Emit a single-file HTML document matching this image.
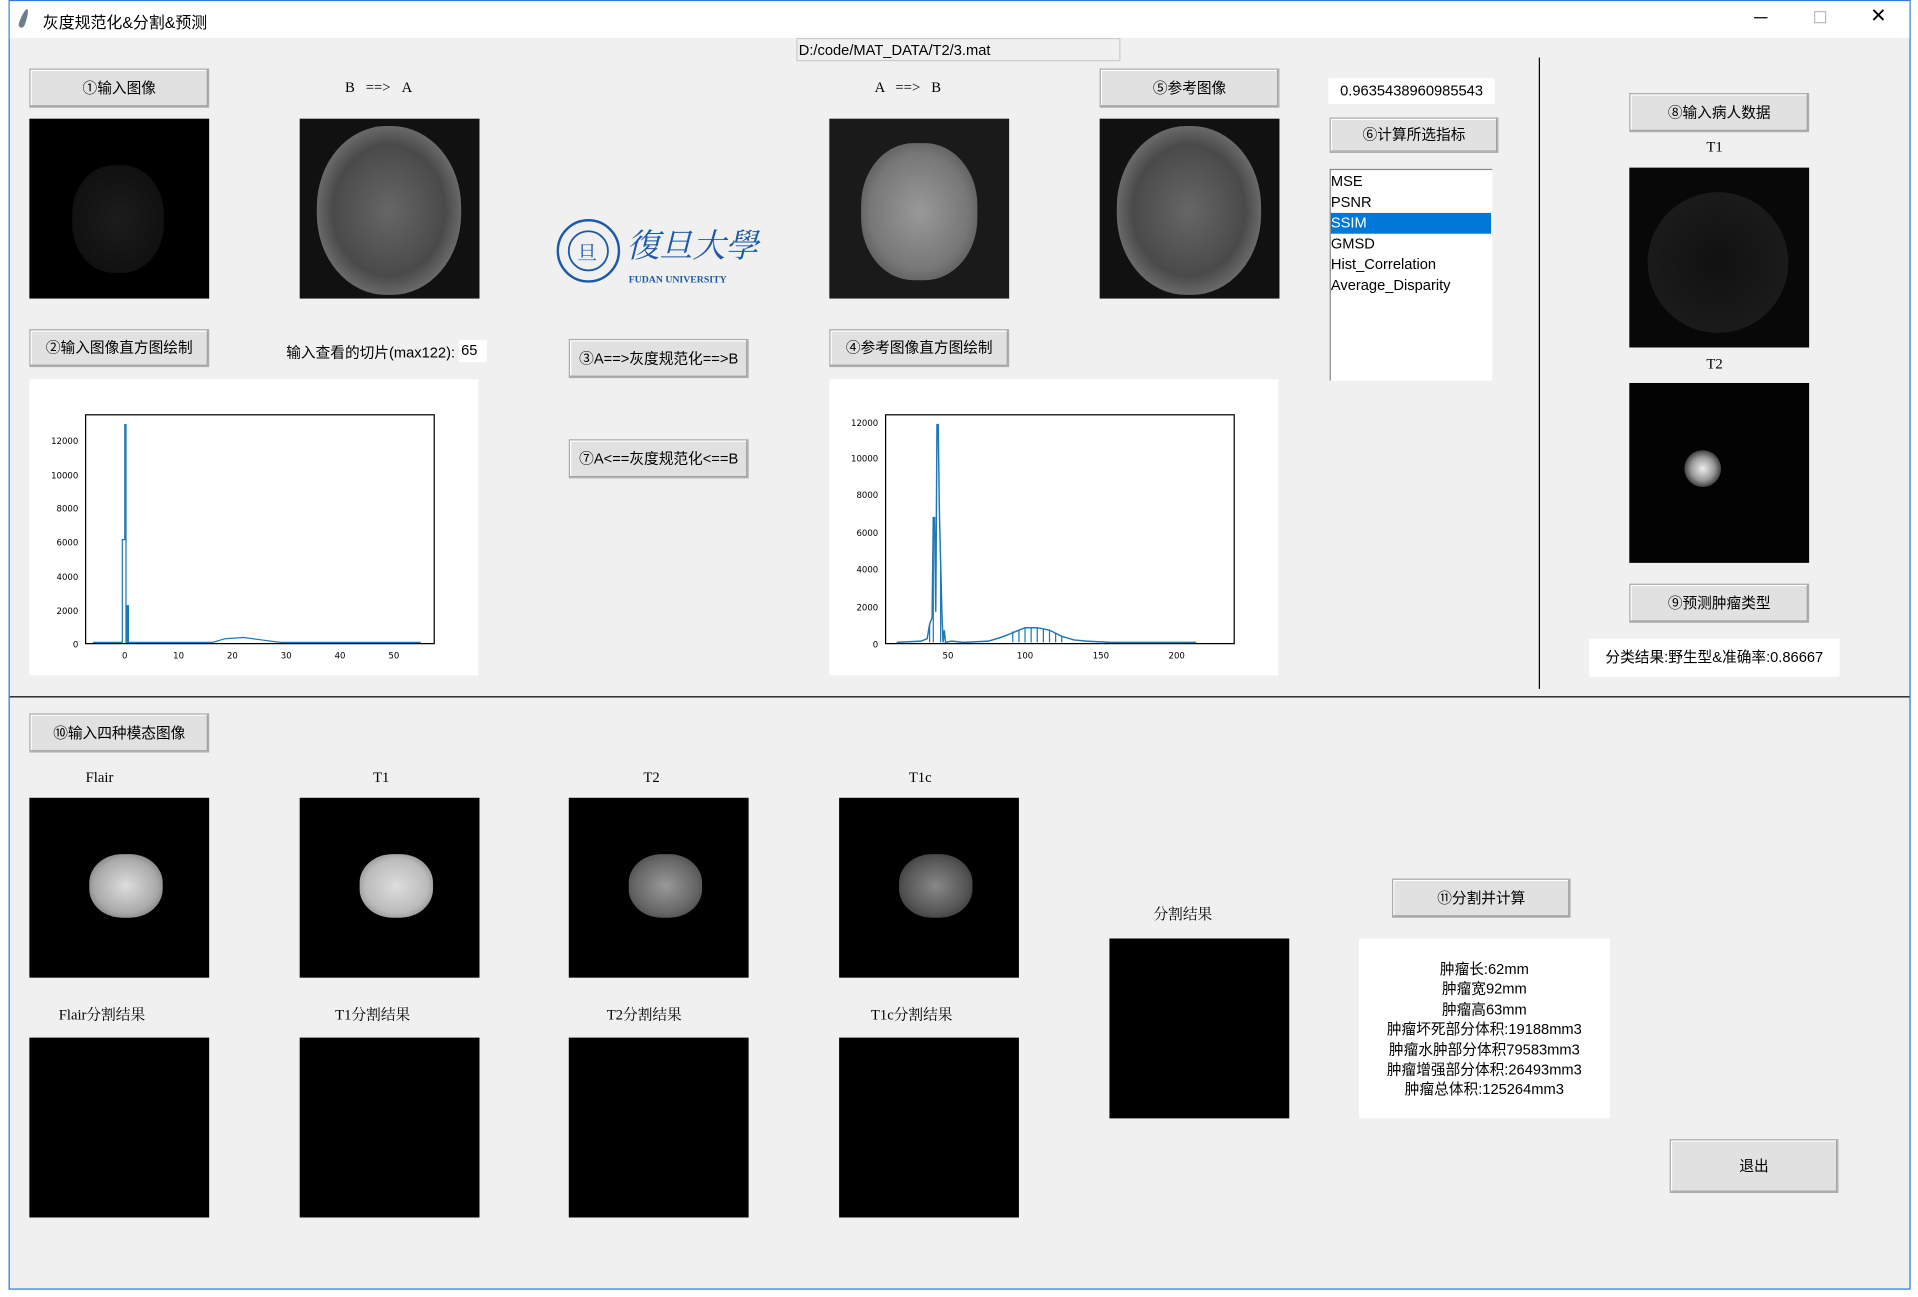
<!DOCTYPE html>
<html><head><meta charset="utf-8"><style>
*{margin:0;padding:0;box-sizing:border-box}
html,body{width:1918px;height:1297px;overflow:hidden;background:#fff}
#w{position:absolute;left:0;top:0;width:1568px;height:1060px;transform:scale(1.2232,1.2236);transform-origin:0 0;font-family:"Liberation Sans","Noto Sans CJK SC",sans-serif;font-size:12px;color:#000}
.a{position:absolute}
.btn{position:absolute;background:#e1e1e1;border:1px solid #adadad;box-shadow:inset -1px -1px 0 #a0a0a0,inset 1px 1px 0 #fff;text-align:center;font-size:12px}
.img{position:absolute;background:#000;overflow:hidden}
.lbl{position:absolute;font-family:"Liberation Serif","Noto Serif CJK SC",serif;font-size:12px;white-space:nowrap}
.wh{position:absolute;background:#fff}
</style></head><body>
<div id="w">
<div class="a" style="left:7px;top:0;width:1555px;height:1054px;border:1px solid #2b7ad6;background:#f0f0f0"></div>
<div class="a" style="left:8px;top:1px;width:1553px;height:30px;background:#fff"></div>
<div class="a" style="left:17px;top:7px;width:5px;height:16px;background:#6a7c90;border-radius:50% 50% 50% 50%/80% 80% 20% 20%;transform:rotate(20deg)"></div>
<div class="a" style="left:35px;top:8px;font-size:13px">灰度规范化&amp;分割&amp;预测</div>
<div class="a" style="left:1434px;top:14px;width:11px;height:1px;background:#000"></div>
<div class="a" style="left:1483px;top:9px;width:10px;height:10px;border:1px solid #bbb"></div>
<div class="a" style="left:1529px;top:3px;font-size:16px;font-weight:300">✕</div>

<div class="a" style="left:651px;top:31px;width:265px;height:19px;background:#f0f0f0;border:1px solid #ccc;padding:2px 1px;font-size:12px">D:/code/MAT_DATA/T2/3.mat</div>

<div class="btn" style="left:24px;top:56px;width:147px;height:32px;line-height:30px">①输入图像</div>
<div class="lbl" style="left:282px;top:64px">B &nbsp;&nbsp;==&gt; &nbsp;&nbsp;A</div>
<div class="lbl" style="left:715px;top:64px">A &nbsp;&nbsp;==&gt; &nbsp;&nbsp;B</div>
<div class="btn" style="left:899px;top:56px;width:147px;height:32px;line-height:30px">⑤参考图像</div>

<div class="img" style="left:24px;top:97px;width:147px;height:147px"><div class="a" style="left:35px;top:38px;width:75px;height:88px;border-radius:45%;background:radial-gradient(#1c1c1c,#111 70%,#000)"></div></div>
<div class="img" style="left:245px;top:97px;width:147px;height:147px;background:#111"><div class="a" style="left:14px;top:6px;width:118px;height:138px;border-radius:48%;background:radial-gradient(#666,#4a4a4a 55%,#7a7a7a 80%,#222 95%)"></div></div>
<div class="img" style="left:678px;top:97px;width:147px;height:147px;background:#1a1a1a"><div class="a" style="left:26px;top:20px;width:95px;height:112px;border-radius:45%;background:radial-gradient(#999,#777 60%,#444 95%)"></div></div>
<div class="img" style="left:899px;top:97px;width:147px;height:147px;background:#111"><div class="a" style="left:14px;top:6px;width:118px;height:138px;border-radius:48%;background:radial-gradient(#666,#4a4a4a 55%,#7a7a7a 80%,#222 95%)"></div></div>

<svg class="a" style="left:455px;top:172px" width="170" height="62">
<circle cx="26" cy="33" r="25" fill="none" stroke="#1c5aa8" stroke-width="2"/>
<circle cx="26" cy="33" r="16" fill="none" stroke="#1c5aa8" stroke-width="1.5"/>
<text x="17" y="40" font-size="16" fill="#1c5aa8" font-family="Noto Serif CJK SC,serif">旦</text>
<text x="57" y="38" font-size="27" fill="#1c5aa8" font-family="Noto Serif CJK SC,serif" font-style="italic">復旦大學</text>
<text x="59" y="59" font-size="8" fill="#1c5aa8" font-family="Liberation Serif,serif" font-weight="bold">FUDAN UNIVERSITY</text>
</svg>

<div class="wh" style="left:1086px;top:64px;width:136px;height:21px;text-align:center;line-height:21px">0.9635438960985543</div>
<div class="btn" style="left:1087px;top:96px;width:138px;height:29px;line-height:27px">⑥计算所选指标</div>
<div class="wh" style="left:1087px;top:138px;width:133px;height:173px;border-left:1px solid #888;border-top:1px solid #888;line-height:17px;padding-top:1px">
<div>MSE</div><div>PSNR</div><div style="background:#0078d7;color:#fff;width:131px">SSIM</div><div>GMSD</div><div>Hist_Correlation</div><div>Average_Disparity</div></div>

<div class="a" style="left:1258px;top:47px;width:1px;height:516px;background:#000"></div>
<div class="btn" style="left:1332px;top:76px;width:147px;height:32px;line-height:30px">⑧输入病人数据</div>
<div class="lbl" style="left:1395px;top:113px">T1</div>
<div class="img" style="left:1332px;top:137px;width:147px;height:147px;background:#080808"><div class="a" style="left:15px;top:20px;width:115px;height:115px;border-radius:50%;background:radial-gradient(#111,#1c1c1c 80%,#080808)"></div></div>
<div class="lbl" style="left:1395px;top:290px">T2</div>
<div class="img" style="left:1332px;top:313px;width:147px;height:147px;background:#030303"><div class="a" style="left:45px;top:55px;width:30px;height:30px;border-radius:50%;background:radial-gradient(#eee,#999 45%,#222 80%,transparent)"></div></div>
<div class="btn" style="left:1332px;top:477px;width:147px;height:32px;line-height:30px">⑨预测肿瘤类型</div>
<div class="wh" style="left:1299px;top:522px;width:205px;height:31px;line-height:31px;text-align:center">分类结果:野生型&amp;准确率:0.86667</div>

<div class="btn" style="left:24px;top:269px;width:147px;height:31px;line-height:29px">②输入图像直方图绘制</div>
<div class="a" style="left:234px;top:279px">输入查看的切片(max122):</div>
<div class="wh" style="left:375px;top:278px;width:23px;height:18px;padding-left:2px;line-height:17px">65</div>
<div class="btn" style="left:465px;top:277px;width:147px;height:32px;line-height:30px">③A==&gt;灰度规范化==&gt;B</div>
<div class="btn" style="left:465px;top:359px;width:147px;height:32px;line-height:30px">⑦A&lt;==灰度规范化&lt;==B</div>
<div class="btn" style="left:678px;top:269px;width:147px;height:31px;line-height:29px">④参考图像直方图绘制</div>

<svg class="a" style="left:24px;top:310px;background:#fff" width="367" height="242" font-family="DejaVu Sans,sans-serif" font-size="7">
<rect x="46" y="29" width="285" height="187" fill="none" stroke="#000"/>
<g text-anchor="end"><text x="40" y="219">0</text><text x="40" y="192">2000</text><text x="40" y="164">4000</text><text x="40" y="136">6000</text><text x="40" y="108">8000</text><text x="40" y="81">10000</text><text x="40" y="53">12000</text></g>
<g text-anchor="middle"><text x="78" y="228">0</text><text x="122" y="228">10</text><text x="166" y="228">20</text><text x="210" y="228">30</text><text x="254" y="228">40</text><text x="298" y="228">50</text></g>
<polyline fill="none" stroke="#1f77b4" stroke-width="1" points="52,215 76,215 76,131 78,131 78,37 79,37 79,215 80,215 80,185 81,185 81,215 150,215 160,212 175,211 190,213 205,215 320,215"/>
</svg>
<svg class="a" style="left:678px;top:310px;background:#fff" width="367" height="242" font-family="DejaVu Sans,sans-serif" font-size="7">
<rect x="46" y="29" width="285" height="187" fill="none" stroke="#000"/>
<g text-anchor="end"><text x="40" y="219">0</text><text x="40" y="189">2000</text><text x="40" y="158">4000</text><text x="40" y="128">6000</text><text x="40" y="97">8000</text><text x="40" y="67">10000</text><text x="40" y="38">12000</text></g>
<g text-anchor="middle"><text x="97" y="228">50</text><text x="160" y="228">100</text><text x="222" y="228">150</text><text x="284" y="228">200</text></g>
<polyline fill="none" stroke="#1f77b4" stroke-width="1.2" points="55,215 75,214 80,212 82,200 84,195 85,113 86,113 87,190 88,37 89,37 90,110 91,150 92,190 93,215 94,205 95,215 100,214 110,215 130,214 140,211 148,208 155,205 160,203 170,203 180,205 190,210 200,213 210,214 230,215 300,215"/>
<g stroke="#1f77b4" stroke-width="1"><line x1="85" y1="113" x2="85" y2="215"/><line x1="82" y1="200" x2="82" y2="215"/><line x1="91" y1="150" x2="91" y2="215"/><line x1="150" y1="206" x2="150" y2="215"/><line x1="155" y1="205" x2="155" y2="215"/><line x1="160" y1="203" x2="160" y2="215"/><line x1="165" y1="203" x2="165" y2="215"/><line x1="170" y1="203" x2="170" y2="215"/><line x1="175" y1="204" x2="175" y2="215"/><line x1="180" y1="205" x2="180" y2="215"/><line x1="185" y1="207" x2="185" y2="215"/><line x1="190" y1="210" x2="190" y2="215"/></g>
</svg>

<div class="a" style="left:8px;top:569px;width:1553px;height:1px;background:#000"></div>
<div class="btn" style="left:24px;top:583px;width:147px;height:32px;line-height:30px">⑩输入四种模态图像</div>
<div class="lbl" style="left:70px;top:628px">Flair</div>
<div class="lbl" style="left:305px;top:628px">T1</div>
<div class="lbl" style="left:526px;top:628px">T2</div>
<div class="lbl" style="left:743px;top:628px">T1c</div>
<div class="img" style="left:24px;top:652px;width:147px;height:147px"><div class="a" style="left:49px;top:46px;width:60px;height:52px;border-radius:45%;background:radial-gradient(#ddd,#aaa 60%,#555)"></div></div>
<div class="img" style="left:245px;top:652px;width:147px;height:147px"><div class="a" style="left:49px;top:46px;width:60px;height:52px;border-radius:45%;background:radial-gradient(#ddd,#bbb 60%,#666)"></div></div>
<div class="img" style="left:465px;top:652px;width:147px;height:147px"><div class="a" style="left:49px;top:46px;width:60px;height:52px;border-radius:45%;background:radial-gradient(#999,#666 60%,#333)"></div></div>
<div class="img" style="left:686px;top:652px;width:147px;height:147px"><div class="a" style="left:49px;top:46px;width:60px;height:52px;border-radius:45%;background:radial-gradient(#888,#555 60%,#222)"></div></div>
<div class="lbl" style="left:48px;top:820px">Flair分割结果</div>
<div class="lbl" style="left:274px;top:820px">T1分割结果</div>
<div class="lbl" style="left:496px;top:820px">T2分割结果</div>
<div class="lbl" style="left:712px;top:820px">T1c分割结果</div>
<div class="img" style="left:24px;top:848px;width:147px;height:147px"></div>
<div class="img" style="left:245px;top:848px;width:147px;height:147px"></div>
<div class="img" style="left:465px;top:848px;width:147px;height:147px"></div>
<div class="img" style="left:686px;top:848px;width:147px;height:147px"></div>

<div class="lbl" style="left:943px;top:738px">分割结果</div>
<div class="img" style="left:907px;top:767px;width:147px;height:147px"></div>
<div class="btn" style="left:1138px;top:718px;width:146px;height:32px;line-height:30px">⑪分割并计算</div>
<div class="wh" style="left:1111px;top:767px;width:205px;height:147px;text-align:center;padding-top:17px;line-height:16.4px">肿瘤长:62mm<br>肿瘤宽92mm<br>肿瘤高63mm<br>肿瘤坏死部分体积:19188mm3<br>肿瘤水肿部分体积79583mm3<br>肿瘤增强部分体积:26493mm3<br>肿瘤总体积:125264mm3</div>
<div class="btn" style="left:1365px;top:931px;width:138px;height:44px;line-height:42px">退出</div>
</div>
</body></html>
